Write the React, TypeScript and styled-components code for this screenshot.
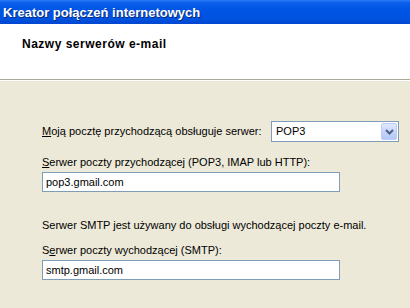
import React from "react";
import styled, { createGlobalStyle } from "styled-components";

const GlobalStyle = createGlobalStyle`
  html, body {
    margin: 0;
    padding: 0;
    background: #ece9d8;
  }
  body {
    font-family: "Liberation Sans", Arial, sans-serif;
    font-size: 11px;
    color: #000;
  }
`;

const Window = styled.div`
  width: 410px;
  height: 308px;
  overflow: hidden;
  display: flex;
  flex-direction: column;
  background: #ece9d8;
`;

const TitleBar = styled.div`
  height: 24px;
  flex: none;
  display: flex;
  align-items: center;
  padding-left: 3px;
  background: linear-gradient(
    to bottom,
    #2a7bf5 0%,
    #0a5eea 12%,
    #0055e5 40%,
    #0052df 80%,
    #0046cf 100%
  );
  color: #fff;
  font-family: "Liberation Sans", Arial, sans-serif;
  font-weight: bold;
  font-size: 13px;
  text-shadow: 1px 1px 0 #0a2a7a;
`;

const Header = styled.div`
  height: 56px;
  flex: none;
  background: #fff;
  border-bottom: 1px solid #aca899;
  box-shadow: 0 1px 0 #fff;
  padding: 13px 0 0 22px;
  box-sizing: border-box;
`;

const HeaderTitle = styled.div`
  font-weight: bold;
  font-size: 12px;
  letter-spacing: 0.5px;
  line-height: 14px;
`;

const Body = styled.div`
  flex: 1;
  padding: 41px 0 0 42px;
  display: flex;
  flex-direction: column;
`;

const ComboRow = styled.div`
  display: flex;
  align-items: center;
  height: 21px;
`;

const RowLabel = styled.label`
  width: 229px;
  line-height: 13px;
`;

const Label = styled.label<{ $gap: number }>`
  display: block;
  line-height: 13px;
  margin-top: ${p => p.$gap}px;
`;

const Info = styled.div<{ $gap: number }>`
  line-height: 13px;
  margin-top: ${p => p.$gap}px;
`;

const Key = styled.span`
  text-decoration: underline;
`;

const Combo = styled.div`
  width: 128px;
  height: 21px;
  box-sizing: border-box;
  border: 1px solid #7f9db9;
  background: #fff;
  display: flex;
  align-items: center;
  padding: 1px;
`;

const ComboText = styled.div`
  flex: 1;
  padding-left: 3px;
  line-height: 13px;
`;

const DropButton = styled.div`
  width: 16px;
  height: 17px;
  box-sizing: border-box;
  border: 1px solid #bccdf5;
  border-radius: 2px;
  background: linear-gradient(to bottom, #e0e9fd 0%, #c6d5fc 50%, #b4c8f7 100%);
  display: flex;
  align-items: center;
  justify-content: center;
`;

const TextBox = styled.div`
  width: 298px;
  height: 20px;
  box-sizing: border-box;
  border: 1px solid #7f9db9;
  background: #fff;
  margin-top: 3px;
  padding-left: 3px;
  display: flex;
  align-items: center;
`;

const Chevron = () => (
  <svg width="9" height="6" viewBox="0 0 9 6">
    <path d="M1 1 L4.5 4.5 L8 1" fill="none" stroke="#4d6185" strokeWidth="2" />
  </svg>
);

export default function App() {
  return (
    <Window>
      <GlobalStyle />
      <TitleBar>Kreator połączeń internetowych</TitleBar>
      <Header>
        <HeaderTitle>Nazwy serwerów e-mail</HeaderTitle>
      </Header>
      <Body>
        <ComboRow>
          <RowLabel>
            <Key>M</Key>oją pocztę przychodzącą obsługuje serwer:
          </RowLabel>
          <Combo>
            <ComboText>POP3</ComboText>
            <DropButton>
              <Chevron />
            </DropButton>
          </Combo>
        </ComboRow>
        <Label $gap={14}>
          <Key>S</Key>erwer poczty przychodzącej (POP3, IMAP lub HTTP):
        </Label>
        <TextBox>pop3.gmail.com</TextBox>
        <Info $gap={27}>
          Serwer SMTP jest używany do obsługi wychodzącej poczty e-mail.
        </Info>
        <Label $gap={12}>
          S<Key>e</Key>rwer poczty wychodzącej (SMTP):
        </Label>
        <TextBox>smtp.gmail.com</TextBox>
      </Body>
    </Window>
  );
}
